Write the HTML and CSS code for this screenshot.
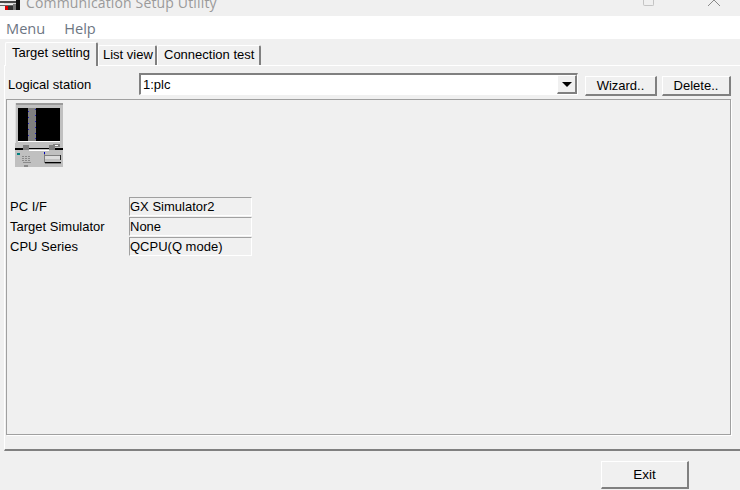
FILE: index.html
```html
<!DOCTYPE html>
<html lang="en">
<head>
<meta charset="utf-8">
<title>Communication Setup Utility</title>
<link rel="stylesheet" href="styles.css">
</head>
<body>
<div class="window">
  <header class="titlebar">
    <svg class="app-icon" width="20" height="10" viewBox="0 0 20 10" shape-rendering="crispEdges">
      <rect width="20" height="10" fill="#f0f0f0"/>
      <rect x="0" y="1" width="16" height="2" fill="#4a4a4a"/>
      <rect x="4" y="3" width="12" height="1" fill="#d8d8d8"/>
      <rect x="0" y="5" width="14" height="1" fill="#666"/>
      <rect x="5" y="6" width="3" height="4" fill="#e00000"/>
      <rect x="8" y="6" width="5" height="4" fill="#333"/>
      <rect x="13" y="4" width="3" height="6" fill="#777"/>
      <rect x="16" y="0" width="4" height="10" fill="#111"/>
    </svg>
    <span class="title-text">Communication Setup Utility</span>
    <span class="title-controls">
      <span class="max-btn"></span>
      <svg class="close-btn" width="14" height="6" viewBox="0 0 14 6"><path d="M1 6 L7 0 L13 6" fill="none" stroke="#8a8a8a" stroke-width="1"/></svg>
    </span>
  </header>
  <nav class="menubar">
    <span class="menu-item">Menu</span>
    <span class="menu-item">Help</span>
  </nav>
  <div class="tabs">
    <span class="tab tab-active">Target setting</span>
    <span class="tab tab-second">List view</span>
    <span class="tab tab-third">Connection test</span>
  </div>
  <main class="panel">
    <div class="station-row">
      <span class="station-label">Logical station</span>
      <div class="combo">
        <span class="combo-value">1:plc</span>
        <span class="combo-arrow"><span class="arrow-glyph"></span></span>
      </div>
      <button class="btn btn-wizard">Wizard..</button>
      <button class="btn btn-delete">Delete..</button>
    </div>
    <section class="group">
      <svg class="pc-image" width="48" height="64" viewBox="0 0 48 64" shape-rendering="crispEdges">
        <rect width="48" height="64" fill="#c0c0c0"/>
        <rect width="48" height="2" fill="#9a9a9a"/>
        <rect width="1" height="40" fill="#e0e0e0"/>
        <rect x="3" y="5" width="42" height="33" fill="#000"/>
        <rect x="13" y="5" width="8" height="33" fill="#808080"/>
        <g fill="#2020c0">
          <rect x="13" y="8" width="1" height="1"/><rect x="13" y="14" width="1" height="1"/><rect x="13" y="20" width="1" height="1"/><rect x="13" y="26" width="1" height="1"/><rect x="13" y="32" width="1" height="1"/>
          <rect x="20" y="6" width="1" height="1"/><rect x="20" y="12" width="1" height="1"/><rect x="20" y="18" width="1" height="1"/><rect x="20" y="24" width="1" height="1"/><rect x="20" y="30" width="1" height="1"/><rect x="20" y="35" width="1" height="1"/>
        </g>
        <rect x="3" y="38" width="42" height="1" fill="#fff"/>
        <rect x="38" y="41" width="7" height="3" fill="#808080"/>
        <rect x="40" y="42" width="3" height="1" fill="#fff"/>
        <rect x="0" y="45" width="48" height="1" fill="#000"/>
        <rect x="8" y="42" width="6" height="5" fill="#808080"/>
        <rect x="34" y="42" width="6" height="5" fill="#808080"/>
        <rect x="0" y="46" width="8" height="1" fill="#000"/>
        <rect x="40" y="46" width="8" height="1" fill="#000"/>
        <rect x="14" y="47" width="20" height="1" fill="#fff"/>
        <rect x="2" y="50" width="3" height="2" fill="#008080"/>
        <rect x="29" y="49" width="1" height="2" fill="#0000c0"/>
        <rect x="29" y="51" width="1" height="9" fill="#808080"/>
        <rect x="30" y="52" width="15" height="1" fill="#808080"/>
        <rect x="30" y="53" width="15" height="3" fill="#dcdcdc"/>
        <rect x="45" y="52" width="1" height="5" fill="#222"/>
        <rect x="30" y="59" width="16" height="1" fill="#000"/>
        <rect x="30" y="60" width="16" height="1" fill="#808080"/>
        <g fill="#8a8a8a">
          <rect x="7" y="53" width="2" height="1"/><rect x="10" y="53" width="2" height="1"/><rect x="13" y="53" width="2" height="1"/>
          <rect x="7" y="55" width="2" height="1"/><rect x="10" y="55" width="2" height="1"/><rect x="13" y="55" width="2" height="1"/>
          <rect x="7" y="57" width="2" height="1"/><rect x="10" y="57" width="2" height="1"/><rect x="13" y="57" width="2" height="1"/>
          <rect x="8" y="59" width="8" height="1"/>
          <rect x="9" y="62" width="4" height="2"/>
        </g>
      </svg>
      <dl class="fields">
        <div class="field"><dt>PC I/F</dt><dd>GX Simulator2</dd></div>
        <div class="field"><dt>Target Simulator</dt><dd>None</dd></div>
        <div class="field"><dt>CPU Series</dt><dd>QCPU(Q mode)</dd></div>
      </dl>
    </section>
  </main>
  <footer class="footer">
    <button class="btn btn-exit">Exit</button>
  </footer>
</div>
</body>
</html>
```
FILE: styles.css
```css
* { box-sizing: border-box; }
html, body { margin: 0; padding: 0; }
body {
  width: 740px;
  height: 490px;
  overflow: hidden;
  background: #f0f0f0;
  font-family: "Liberation Sans", Arial, sans-serif;
  font-size: 13px;
  color: #000;
}
.window { display: flex; flex-direction: column; height: 490px; }

.titlebar {
  height: 16px;
  display: flex;
  align-items: flex-end;
  overflow: hidden;
  flex: none;
}
.app-icon { flex: none; margin-bottom: 6px; }
.title-text {
  font-family: "Open Sans", sans-serif;
  font-size: 14px;
  line-height: 20px;
  height: 20px;
  color: #9a9a9a;
  margin-left: 6px;
  margin-bottom: 3px;
  white-space: nowrap;
  letter-spacing: 0.15px;
}
.title-controls { margin-left: auto; display: flex; align-items: flex-start; align-self: flex-start; }
.max-btn {
  width: 11px;
  height: 6px;
  border: 1px solid #c4c4c4;
  border-top: 0;
  border-radius: 0 0 2px 2px;
  margin-right: 53px;
}
.close-btn { margin-right: 19px; }

.menubar {
  height: 23px;
  flex: none;
  background: #fff;
  display: flex;
  align-items: center;
  padding-left: 6px;
  gap: 19px;
  font-family: "Open Sans", sans-serif;
  font-size: 14.6px;
  color: #6d7683;
}

.tabs {
  height: 26px;
  flex: none;
  display: flex;
  align-items: flex-end;
  padding-left: 5px;
  position: relative;
  z-index: 1;
}
.tab {
  height: 20px;
  line-height: 17px;
  border-top: 1px solid #fff;
  border-left: 1px solid #fff;
  border-right: 2px solid #808080;
  white-space: nowrap;
  font-size: 13px;
}
.tab-active {
  height: 24px;
  line-height: 20px;
  width: 93px;
  padding: 0 0 3px 6px;
  margin-bottom: -1px;
  background: #f0f0f0;
  border-radius: 2px 2px 0 0;
}
.tab-second { width: 59px; padding-left: 4px; border-radius: 2px 2px 0 0; }
.tab-third { width: 104px; padding-left: 6px; border-radius: 2px 2px 0 0; }

.panel {
  height: 386px;
  flex: none;
  margin-left: 4px;
  border-top: 1px solid #fff;
  border-left: 1px solid #fff;
  border-bottom: 2px solid #808080;
  padding: 7px 9px 0 1px;
  display: flex;
  flex-direction: column;
}
.station-row {
  display: flex;
  align-items: flex-start;
  height: 26px;
}
.station-label {
  width: 133px;
  padding: 4px 0 0 2px;
  line-height: 16px;
  flex: none;
}
.combo {
  width: 439px;
  height: 22px;
  flex: none;
  display: flex;
  justify-content: space-between;
  background: #fff;
  border-top: 2px solid #808080;
  border-left: 2px solid #808080;
  border-right: 1px solid #fff;
  border-bottom: 1px solid #fff;
}
.combo-value { padding-left: 2px; line-height: 20px; }
.combo-arrow {
  width: 20px;
  height: 19px;
  background: #f0f0f0;
  border-top: 1px solid #fff;
  border-left: 1px solid #fff;
  border-right: 2px solid #808080;
  border-bottom: 2px solid #808080;
  display: flex;
  align-items: center;
  justify-content: center;
}
.arrow-glyph {
  width: 0;
  height: 0;
  border-left: 5px solid transparent;
  border-right: 5px solid transparent;
  border-top: 5px solid #000;
}
.btn {
  font-family: "Liberation Sans", Arial, sans-serif;
  font-size: 13px;
  color: #000;
  background: #f0f0f0;
  border-top: 1px solid #fff;
  border-left: 1px solid #fff;
  border-right: 2px solid #808080;
  border-bottom: 2px solid #808080;
  padding: 0;
  flex: none;
}
.btn-wizard { width: 72px; height: 20px; margin: 3px 0 0 7px; }
.btn-delete { width: 69px; height: 20px; margin: 3px 0 0 5px; }

.group {
  width: 725px;
  height: 336px;
  flex: none;
  border: 1px solid #a0a0a0;
  box-shadow: 1px 1px 0 #fff;
  padding: 3px 0 0 8px;
  display: flex;
  flex-direction: column;
}
.pc-image { display: block; flex: none; }
.fields { margin: 30px 0 0 -5px; padding: 0; }
.field { display: flex; height: 20px; align-items: flex-start; }
dt {
  width: 119px;
  line-height: 18px;
  padding-top: 1px;
  font-size: 13px;
}
dd {
  margin: 0;
  width: 123px;
  height: 19px;
  border-top: 1px solid #a0a0a0;
  border-left: 1px solid #a0a0a0;
  border-right: 1px solid #fff;
  border-bottom: 1px solid #fff;
  padding-left: 0;
  line-height: 18px;
  font-size: 13px;
}

.footer {
  flex: 1;
  display: flex;
  justify-content: flex-end;
  padding: 10px 51px 0 0;
}
.btn-exit { width: 88px; height: 28px; font-size: 13.5px; }
```
